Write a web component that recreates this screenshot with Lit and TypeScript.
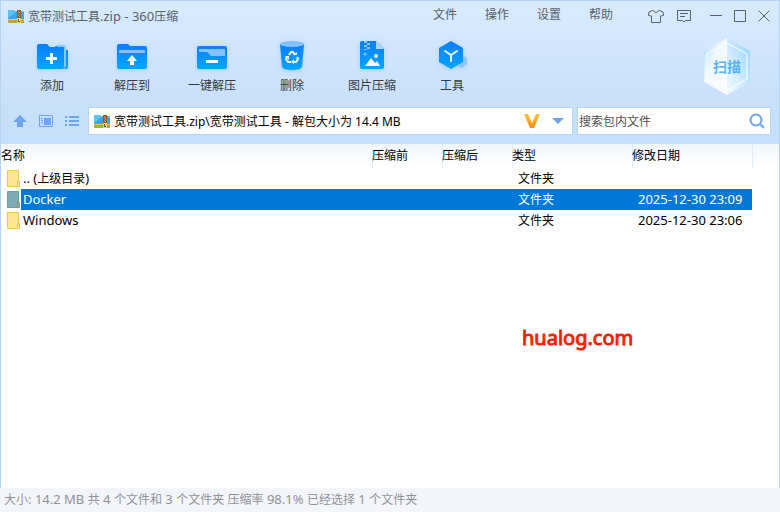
import { LitElement, html, svg, css } from "lit";
import { customElement, state } from "lit/decorators.js";
import { classMap } from "lit/directives/class-map.js";

const archiveIcon = html`<svg width="17" height="15" viewBox="0 0 17 15" aria-hidden="true">
  <path d="M0 1h6l1 1h8a1 1 0 0 1 1 1v7H0z" fill="#5ac4fa"/>
  <path d="M0 9l8-6h7l1 1v6H0z" fill="#36a8f3"/>
  <path d="M0 10h16v1H0z" fill="#ffc53d"/>
  <path d="M0 11h16v1H0z" fill="#ff8618"/>
  <path d="M0 12h16v2H1a1 1 0 0 1-1-1z" fill="#7cc544"/>
  <path d="M9 1h4v13H9z" fill="#a3561c"/>
  <path d="M10 2h1v1h-1zM11 3h1v1h-1zM10 4h1v1h-1zM11 5h1v1h-1zM10 6h1v1h-1zM11 7h1v1h-1z" fill="#d69a52"/>
  <path d="M9 9h4v5H9z" fill="#ffd25a"/><path d="M10 10h2v3h-2z" fill="#8a4a14"/>
  <path d="M11 10h1v2h-1z" fill="#ffe9a8"/>
</svg>`;

const grad = svg`<defs><linearGradient id="g" x1="0" y1="0" x2="0" y2="1">
  <stop offset="0" stop-color="#0a7efc"/><stop offset="1" stop-color="#05a6ff"/></linearGradient></defs>`;

const tools = [
  { name: "添加", art: svg`
    <path d="M2 6q0-2 2-2h8l3 3h13q2 0 2 2v17q0 3-3 3H4q-2 0-2-2z" fill="url(#g)"/>
    <path d="M20 6h9q2 0 2 2v2h2v17q0 2-3 2z" fill="url(#g)"/>
    <path d="M22 6h6q2 0 2 2v19" fill="none" stroke="#8cc6ff" stroke-width="2"/>
    <path d="M15 13h3v4h4v3h-4v4h-3v-4h-4v-3h4z" fill="#f4faff"/>` },
  { name: "解压到", art: svg`
    <path d="M2 6q0-2 2-2h9l2 2h15q2 0 2 2v19q0 2-2 2H4q-2 0-2-2z" fill="url(#g)"/>
    <path d="M4 13v-2q0-1 1-1h24q1 0 1 1v2z" fill="#84c3ff"/>
    <path d="M17 15l5 6h-3v4h-4v-4h-3z" fill="#f4faff"/>` },
  { name: "一键解压", art: svg`
    <path d="M2 8q0-2 2-2h26q2 0 2 2v19q0 2-2 2H4q-2 0-2-2z" fill="url(#g)"/>
    <path d="M4 9h25q1 0 1 1v6H16l-4-4H4z" fill="#84c3ff"/>
    <path d="M11 20h12v3H11z" fill="#f4faff"/>` },
  { name: "删除", art: svg`
    <path d="M5 4h24l-2 23q-1 3-10 3T7 27z" fill="url(#g)"/>
    <ellipse cx="17" cy="4" rx="12" ry="3" fill="#84c3ff"/>
    <g fill="none" stroke="#e9f5ff" stroke-width="2">
      <path d="M14 15l2-3h2l2 3"/><path d="M22 17l1 2-2 3h-3"/><path d="M16 22h-3l-2-3 1-2"/>
    </g>
    <path d="M18 15h4v-3zM19 19v5l-3-2zM10 16h4v4z" fill="#e9f5ff"/>` },
  { name: "图片压缩", art: svg`
    <path d="M5 1h16l8 8v18q0 2-2 2H7q-2 0-2-2V3q0-2 2-2z" fill="url(#g)"/>
    <path d="M21 1l8 8h-8z" fill="#a9d5ff"/>
    <path d="M9 1h3v2H9zM12 3h3v2h-3zM9 5h3v2H9zM12 7h3v2h-3zM9 9h3v1H9z" fill="#8cc6ff"/>
    <circle cx="10" cy="14" r="1.5" fill="#8cc6ff"/>
    <circle cx="21" cy="16" r="2" fill="#f4faff"/>
    <path d="M10 26l6-8 4 5 2-2 3 5z" fill="#f4faff"/>` },
  { name: "工具", art: svg`
    <path d="M27 15l5 3v6l-5 4-6-3z" fill="#8cc6ff"/>
    <path d="M16 1l12 7v14l-12 7-12-7V8z" fill="url(#g)"/>
    <path d="M10 11l6 4 6-4M16 15v6" fill="none" stroke="#e9f5ff" stroke-width="2" stroke-linecap="round"/>` },
];

const rows = [
  { name: ".. (上级目录)", type: "文件夹", date: "" },
  { name: "Docker", type: "文件夹", date: "2025-12-30 23:09" },
  { name: "Windows", type: "文件夹", date: "2025-12-30 23:06" },
];

// Latin runs are set one size above the Chinese characters around them.
const mixed = (text: string) =>
  text.split(/([\x20-\x7e]+)/).filter(Boolean)
    .map((run) => (/^[\x20-\x7e]/.test(run) ? html`<span class="latin">${run}</span>` : run));

@customElement("app-root")
export class AppRoot extends LitElement {
  @state() private selected = 1;

  static styles = css`
    :host {
      display: flex; flex-direction: column; min-height: 100vh; box-sizing: border-box;
      position: relative; color: #000; background: #fff;
      font: 12px/16px "Noto Sans", "Noto Sans CJK SC", sans-serif;
    }
    * { box-sizing: border-box; }
    button, input { font: inherit; color: inherit; border: 0; padding: 0; margin: 0; background: none; }
    svg { display: block; flex: none; }
    .latin { font-size: 13px; white-space: pre; }
    .chrome {
      height: 144px; display: flex; flex-direction: column;
      border: 1px solid #b4d3f2; border-bottom: 0;
      background: linear-gradient(#d8ebff, #c9e0fa 70%, #c3dff9);
    }
    .titlebar { display: flex; align-items: center; height: 30px; padding-left: 7px; color: #595f66; }
    .title { flex: 1; display: flex; align-items: center; gap: 3px; margin: 0; font: inherit; }
    .menu { display: flex; gap: 28px; margin-right: 35px; padding-bottom: 2px; }
    .window, .corner { display: flex; align-items: center; gap: 12px; }
    .window { gap: 18px; padding-right: 9px; }
    .window button { height: 16px; }
    .toolbar { display: flex; align-items: flex-start; height: 76px; padding: 9px 21px 0 11px; }
    .tool { width: 80px; display: flex; flex-direction: column; align-items: center; gap: 6px; color: #333a42; }
    .tool svg { filter: drop-shadow(0 1px 2px #7db8f080); }
    .scan { margin-left: auto; margin-top: -5px; }
    .scan text { font: bold 14px "Noto Sans CJK SC", sans-serif; fill: #58b4fa; }
    .pathbar { display: flex; align-items: center; height: 28px; padding: 0 8px 0 12px; }
    .nav { display: flex; gap: 12px; width: 75px; }
    .fields { flex: 1; display: grid; grid-template-columns: minmax(0, 5fr) minmax(0, 2fr); gap: 4px; }
    .box { display: flex; align-items: center; height: 28px; background: #fff; border: 1px solid #b5d6f6; }
    .address { padding: 0 7px 0 5px; gap: 3px; }
    .address button + button { margin-left: 8px; }
    .search { padding: 0 5px 0 1px; }
    .box input { flex: 1; min-width: 0; height: 20px; outline: 0; }
    .search input::placeholder { color: #505050; opacity: 1; }
    .content { flex: 1; border: solid #b4d3f2; border-width: 0 1px; }
    table { width: 100%; table-layout: fixed; border-collapse: collapse; }
    th, td { padding: 0; text-align: left; font-weight: 400; white-space: nowrap; }
    thead tr { height: 24px; background: linear-gradient(#f0f7ff, #fff); }
    thead th + th { box-shadow: inset 1px 0 #deedfb; }
    tbody tr { height: 21px; }
    .size { width: 70px; }
    .type { width: 120px; }
    .tail { width: 27px; }
    tbody td { padding-left: 6px; }
    .entry { display: flex; align-items: center; height: 21px; }
    .label { flex: 1; line-height: 21px; padding-left: 2px; }
    .picked .label, .picked td:not(:first-child):not(:last-child) { background: #0078d7; color: #fff; }
    .stamp {
      position: absolute; left: 522px; top: 324px; color: #ff1c00; -webkit-text-stroke: 1px #ff1c00;
      font: 400 20px/28px "Noto Sans", sans-serif;
    }
    .status { height: 24px; padding: 3px 4px; color: #8f9399; background: #f3f5fa; }
  `;

  private folder(on: boolean) {
    const edge = on ? "#6d9fa0" : "#ecc94f";
    return html`<svg width="14" height="17" viewBox="0 0 14 17" aria-hidden="true">
      <path d="M.5.5h11v11h1v5H.5z" fill=${on ? "#7daab5" : "#ffe594"} stroke=${edge}/>
      <path d="M10.500 15v-4h1" fill="none" stroke=${edge}/></svg>`;
  }

  render() {
    return html`
      <header class="chrome">
        <div class="titlebar">
          <h1 class="title">${archiveIcon}<span>${mixed("宽带测试工具.zip - 360压缩")}</span></h1>
          <nav class="menu">${["文件", "操作", "设置", "帮助"].map((m) => html`<button>${m}</button>`)}</nav>
          <div class="window">
            <div class="corner">
              <button aria-label="皮肤"><svg width="16" height="16" viewBox="0 0 16 16" fill="none" stroke="#59626b"><path d="M4.500 2.500L1 4l-.5 3.500 3 .5v6.500h9V8l3-.5L15 4l-3.500-1.500h-1Q10 4.500 8 4.500T5.500 2.500z"/></svg></button>
              <button aria-label="反馈"><svg width="16" height="16" viewBox="0 0 16 16" fill="none" stroke="#59626b"><path d="M1.500 2.500h13v10h-5L8 14l-1.500-1.500h-5zM4 5.500h8M4 8.500h5"/></svg></button>
            </div>
            <div class="corner">
              <button aria-label="最小化"><svg width="12" height="16" viewBox="0 0 12 16" stroke="#59626b"><path d="M0 7.500h12"/></svg></button>
              <button aria-label="最大化"><svg width="12" height="16" viewBox="0 0 12 16" fill="none" stroke="#59626b"><path d="M.5 2.500h11v11H.5z"/></svg></button>
              <button aria-label="关闭"><svg width="12" height="16" viewBox="0 0 12 16" stroke="#59626b"><path d="M.5 2.500l11 11M11.500 2.500l-11 11"/></svg></button>
            </div>
          </div>
        </div>
        <div class="toolbar">
          ${tools.map((t) => html`<button class="tool"><svg width="34" height="32" viewBox="0 0 34 32" aria-hidden="true">${grad}${t.art}</svg><span>${t.name}</span></button>`)}
          <button class="scan"><svg width="62" height="66" viewBox="0 0 62 66">
            <defs>
              <linearGradient id="l" x1="0" y1="0" x2="1" y2="1"><stop offset="0" stop-color="#a9dcff"/><stop offset=".4" stop-color="#eff8ff"/><stop offset="1" stop-color="#fff"/></linearGradient>
              <linearGradient id="r" x1="1" y1="0" x2="0" y2="1"><stop offset="0" stop-color="#92d2ff"/><stop offset=".6" stop-color="#d4edff"/><stop offset="1" stop-color="#f1f9ff"/></linearGradient>
            </defs>
            <path d="M31 3L8 16v31l23 13z" fill="url(#l)"/>
            <path d="M31 3l23 13v31L31 60z" fill="url(#r)"/>
            <path d="M31 8L11 19v25l20 11 20-11V19z" fill="none" stroke="#fff"/>
            <text x="31" y="37" text-anchor="middle">扫描</text>
          </svg></button>
        </div>
        <div class="pathbar">
          <div class="nav">
            <button aria-label="向上"><svg width="14" height="14" viewBox="0 0 14 14"><path d="M7 1l7 7h-4v5H4V8H0z" fill="#6fa5ee"/></svg></button>
            <button aria-label="预览"><svg width="14" height="14" viewBox="0 0 14 14"><path d="M.5 1.500h13v11H.5z" fill="none" stroke="#6fa5ee"/><path d="M5 4h7v7H5zM2 4h2v1H2zM2 6h2v1H2zM2 8h2v1H2z" fill="#6fa5ee"/></svg></button>
            <button aria-label="列表"><svg width="14" height="14" viewBox="0 0 14 14"><path d="M0 2h2v2H0zM4 2h10v2H4zM0 6h2v2H0zM4 6h10v2H4zM0 10h2v2H0zM4 10h10v2H4z" fill="#6fa5ee"/></svg></button>
          </div>
          <div class="fields">
            <div class="box address">
              ${archiveIcon}
              <input aria-label="路径" .value=${"宽带测试工具.zip\\宽带测试工具 - 解包大小为 14.4 MB"}>
              <button aria-label="V"><svg width="16" height="16" viewBox="0 0 16 16"><defs><linearGradient id="v" x1="0" y1="0" x2="0" y2="1"><stop offset="0" stop-color="#ffc438"/><stop offset="1" stop-color="#ff8a00"/></linearGradient></defs><path d="M0 1h4l4 9 4-9h4l-6 14H6z" fill="url(#v)"/></svg></button>
              <button aria-label="展开"><svg width="14" height="8" viewBox="0 0 14 8"><path d="M1 1h12L7 7z" fill="#6fa5ee"/></svg></button>
            </div>
            <div class="box search">
              <input aria-label="搜索" placeholder="搜索包内文件">
              <button aria-label="搜索"><svg width="16" height="16" viewBox="0 0 16 16" fill="none" stroke="#6fa5ee" stroke-width="2"><circle cx="7" cy="7" r="5.500"/><path d="M11 11l4 4"/></svg></button>
            </div>
          </div>
        </div>
      </header>
      <main class="content">
        <table>
          <thead><tr><th>名称</th><th class="size">压缩前</th><th class="size">压缩后</th><th class="type">类型</th><th class="type">修改日期</th><th class="tail"></th></tr></thead>
          <tbody>${rows.map((r, i) => html`<tr class=${classMap({ picked: i === this.selected })} @click=${() => (this.selected = i)}>
            <td><div class="entry">${this.folder(i === this.selected)}<div class="label">${mixed(r.name)}</div></div></td>
            <td></td><td></td><td>${r.type}</td><td>${mixed(r.date)}</td><td></td></tr>`)}</tbody>
        </table>
      </main>
      <div class="stamp">hualog.com</div>
      <footer class="status">${mixed("大小: 14.2 MB 共 4 个文件和 3 个文件夹 压缩率 98.1% 已经选择 1 个文件夹")}</footer>
    `;
  }
}
